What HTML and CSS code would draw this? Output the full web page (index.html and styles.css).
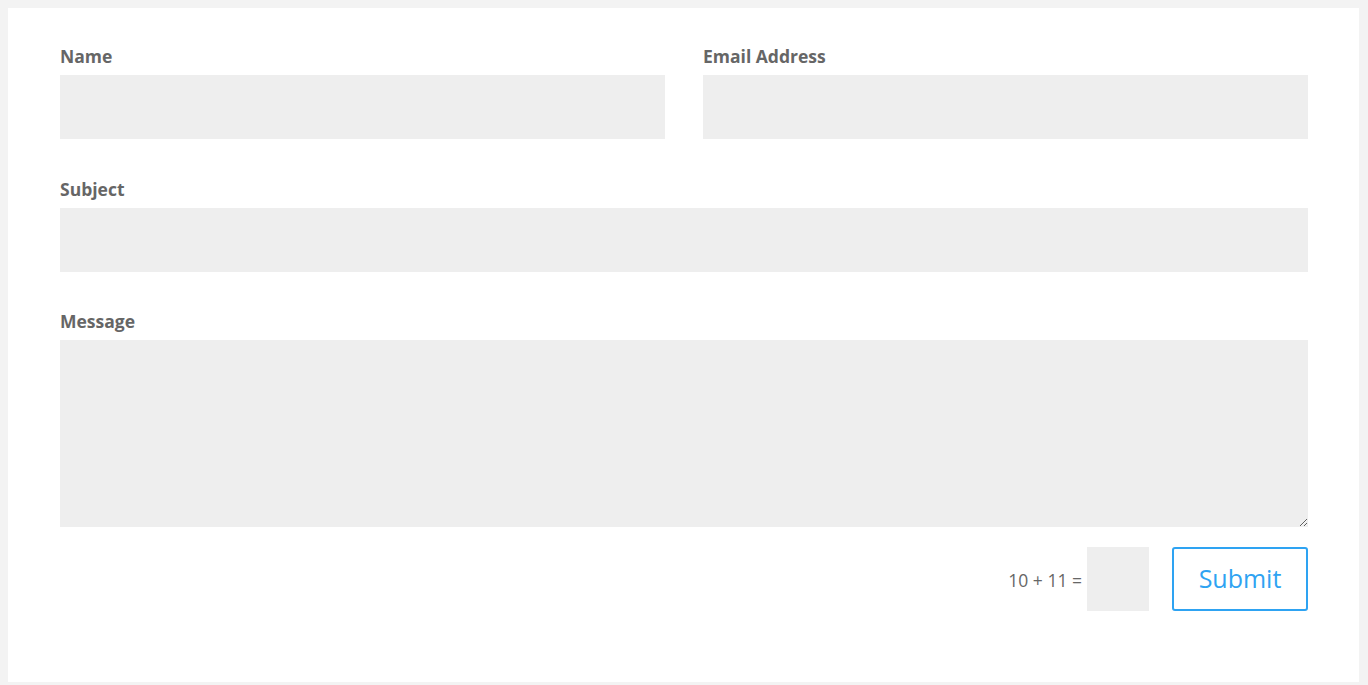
FILE: index.html
```html
<!DOCTYPE html>
<html lang="en">
<head>
<meta charset="utf-8">
<title>Contact form</title>
<link rel="stylesheet" href="styles.css">
</head>
<body>
<div class="panel">
  <form class="form">
    <div class="row two first">
      <div class="field">
        <label class="label" for="name">Name</label>
        <input class="input" id="name" type="text">
      </div>
      <div class="field">
        <label class="label" for="email">Email Address</label>
        <input class="input" id="email" type="text">
      </div>
    </div>
    <div class="row">
      <div class="field">
        <label class="label" for="subject">Subject</label>
        <input class="input" id="subject" type="text">
      </div>
    </div>
    <div class="row last">
      <div class="field">
        <label class="label" for="message">Message</label>
        <textarea class="textarea" id="message"></textarea>
      </div>
    </div>
    <div class="actions">
      <span class="captcha-q">10 + 11 =</span>
      <input class="captcha" type="text">
      <button class="submit" type="button">Submit</button>
    </div>
  </form>
</div>
</body>
</html>
```
FILE: styles.css
```css
html, body {
  margin: 0;
  padding: 0;
}
body {
  background: #f3f3f3;
  padding: 8px 9px 3px 8px;
  font-family: "Open Sans", "Liberation Sans", sans-serif;
}
.panel {
  background: #fff;
  height: 674px;
  box-sizing: border-box;
  padding: 37px 51px 0 52px;
}
.form {
  display: flex;
  flex-direction: column;
}
.row {
  margin-bottom: 38px;
}
.row.first {
  margin-bottom: 39px;
}
.row.last {
  margin-bottom: 20px;
}
.row.two {
  display: grid;
  grid-template-columns: 1fr 1fr;
  column-gap: 38px;
}
.field {
  display: flex;
  flex-direction: column;
}
.label {
  font-size: 17.5px;
  font-weight: 700;
  line-height: 22px;
  color: #666;
  margin-bottom: 8px;
}
.input, .textarea, .captcha {
  border: none;
  background: #eee;
  outline: none;
  margin: 0;
  padding: 0 16px;
  box-sizing: border-box;
  font-family: inherit;
}
.input {
  height: 64px;
  width: 100%;
}
.textarea {
  height: 187px;
  width: 100%;
  display: block;
  resize: vertical;
}
.actions {
  display: flex;
  justify-content: flex-end;
  align-items: center;
  height: 64px;
}
.captcha-q {
  font-size: 17.5px;
  color: #666;
  margin-right: 5px;
  padding-top: 1px;
}
.captcha {
  width: 62px;
  height: 64px;
}
.submit {
  margin-left: 23px;
  width: 136px;
  height: 64px;
  box-sizing: border-box;
  border: 2px solid #2ea3f2;
  border-radius: 3px;
  background: #fff;
  color: #2ea3f2;
  font-family: "Open Sans", "Liberation Sans", sans-serif;
  font-size: 25px;
  font-weight: 400;
  padding: 0 0 2px;
}
```
